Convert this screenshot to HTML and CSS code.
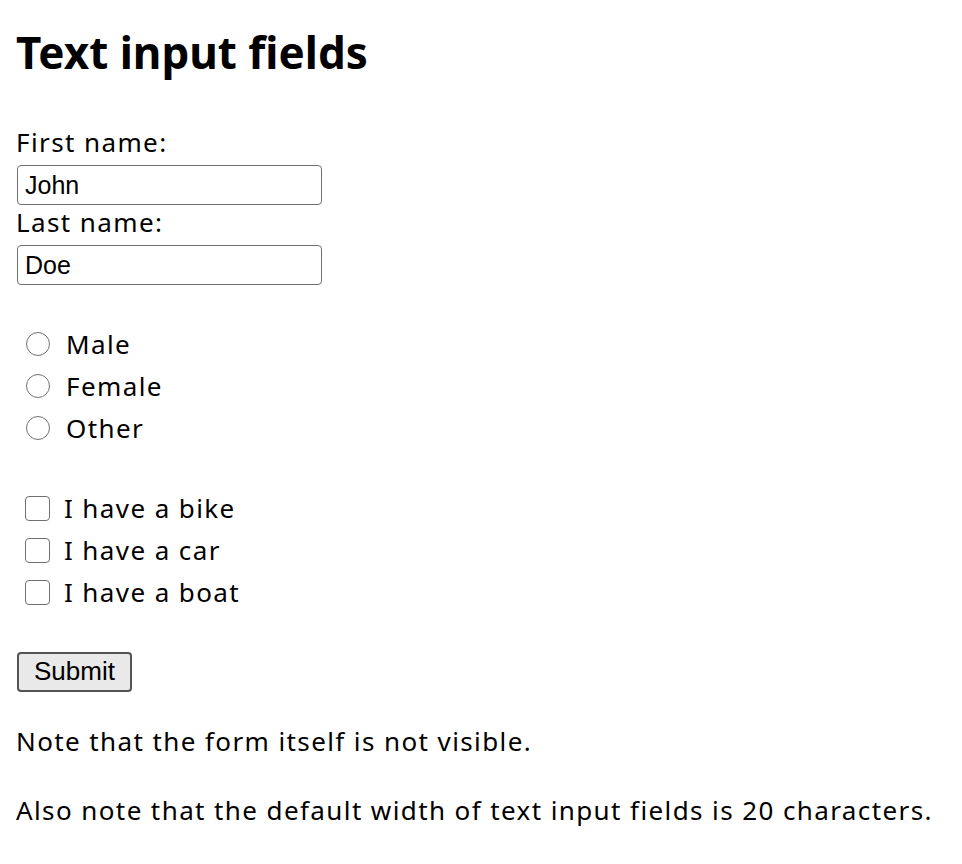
FILE: index.html
```html
<!DOCTYPE html>
<html lang="en">
<head>
<meta charset="utf-8">
<title>Text input fields</title>
<link rel="stylesheet" href="styles.css">
</head>
<body>
<h1 class="title">Text input fields</h1>
<form class="form">
  <label class="label" for="fname">First name:</label>
  <input class="text-input" type="text" id="fname" name="fname" value="John">
  <label class="label" for="lname">Last name:</label>
  <input class="text-input" type="text" id="lname" name="lname" value="Doe">

  <div class="group radios">
    <div class="row">
      <input class="radio" type="radio" id="male" name="gender" value="male">
      <label class="opt-label" for="male">Male</label>
    </div>
    <div class="row">
      <input class="radio" type="radio" id="female" name="gender" value="female">
      <label class="opt-label" for="female">Female</label>
    </div>
    <div class="row">
      <input class="radio" type="radio" id="other" name="gender" value="other">
      <label class="opt-label" for="other">Other</label>
    </div>
  </div>

  <div class="group checks">
    <div class="row">
      <input class="check" type="checkbox" id="v1" name="v1" value="Bike">
      <label class="opt-label" for="v1">I have a bike</label>
    </div>
    <div class="row">
      <input class="check" type="checkbox" id="v2" name="v2" value="Car">
      <label class="opt-label" for="v2">I have a car</label>
    </div>
    <div class="row">
      <input class="check" type="checkbox" id="v3" name="v3" value="Boat">
      <label class="opt-label" for="v3">I have a boat</label>
    </div>
  </div>

  <div class="actions">
    <input class="submit" type="submit" value="Submit">
  </div>
</form>
<p class="note">Note that the form itself is not visible.</p>
<p class="note">Also note that the default width of text input fields is 20 characters.</p>
</body>
</html>
```

FILE: styles.css
```css
html, body {
  background: #ffffff;
}
body {
  margin: 0;
  padding: 0 16px;
  font-family: "Noto Sans", "Liberation Sans", sans-serif;
  font-size: 26px;
  letter-spacing: 1.4px;
  line-height: 40px;
  color: #000000;
}
.title {
  margin: 0;
  padding-top: 24px;
  font-size: 44px;
  line-height: 56px;
  font-weight: 700;
  letter-spacing: 0;
}
.form {
  margin-top: 45px;
  display: flex;
  flex-direction: column;
  align-items: flex-start;
}
.label {
  display: block;
  height: 40px;
  line-height: 34px;
}
.text-input {
  box-sizing: border-box;
  width: 305px;
  height: 40px;
  margin: 0 0 0 1px;
  padding: 0 7px;
  border: 1.5px solid #707070;
  border-radius: 4px;
  font-family: "Liberation Sans", Arial, sans-serif;
  font-size: 25px;
  letter-spacing: 0;
  color: #000;
  background: #fff;
}
.group {
  display: flex;
  flex-direction: column;
  margin-top: 38px;
}
.row {
  display: flex;
  align-items: center;
  height: 42px;
}
.radio {
  appearance: none;
  -webkit-appearance: none;
  box-sizing: border-box;
  width: 24px;
  height: 24px;
  margin: 0 16px 0 10px;
  border: 1.5px solid #707070;
  border-radius: 50%;
  background: #fff;
}
.check {
  appearance: none;
  -webkit-appearance: none;
  box-sizing: border-box;
  width: 25px;
  height: 25px;
  margin: 0 14px 0 9px;
  border: 1.5px solid #707070;
  border-radius: 4px;
  background: #fff;
}
.opt-label {
  line-height: 42px;
}
.actions {
  margin-top: 37px;
}
.submit {
  box-sizing: border-box;
  width: 115px;
  height: 40px;
  margin: 0 0 0 1px;
  padding: 0;
  border: 2px solid #555555;
  border-radius: 4px;
  background: #e9e9e9;
  font-family: "Liberation Sans", Arial, sans-serif;
  font-size: 26px;
  letter-spacing: 0;
  color: #000;
}
.note {
  margin: 29px 0 0 0;
  line-height: 40px;
}
```
